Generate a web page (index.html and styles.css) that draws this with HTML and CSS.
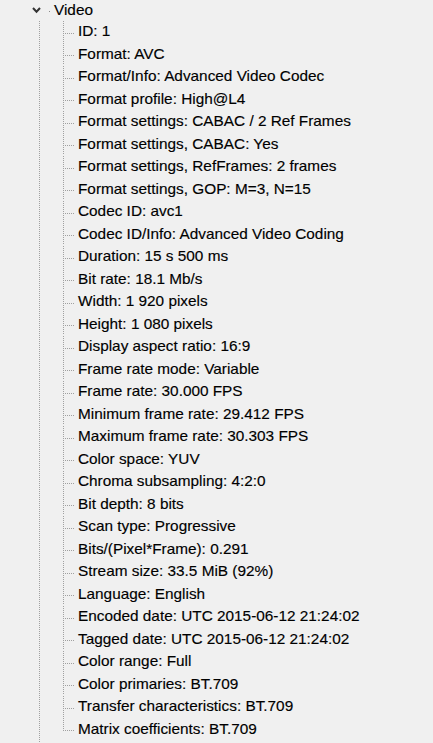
FILE: index.html
```html
<!DOCTYPE html>
<html>
<head>
<meta charset="utf-8">
<link rel="stylesheet" href="styles.css">
</head>
<body>
<div class="tree">
  <div class="root">
    <svg class="chev" width="10" height="7" viewBox="0 0 10 7"><polyline points="1,1 4.5,4.8 8,1" fill="none" stroke="#333" stroke-width="2"/></svg>
    <span class="rootdot"></span>
    <span class="label">Video</span>
  </div>
  <ul class="children">
    <li>ID: 1</li>
    <li>Format: AVC</li>
    <li>Format/Info: Advanced Video Codec</li>
    <li>Format profile: High@L4</li>
    <li>Format settings: CABAC / 2 Ref Frames</li>
    <li>Format settings, CABAC: Yes</li>
    <li>Format settings, RefFrames: 2 frames</li>
    <li>Format settings, GOP: M=3, N=15</li>
    <li>Codec ID: avc1</li>
    <li>Codec ID/Info: Advanced Video Coding</li>
    <li>Duration: 15 s 500 ms</li>
    <li>Bit rate: 18.1 Mb/s</li>
    <li>Width: 1 920 pixels</li>
    <li>Height: 1 080 pixels</li>
    <li>Display aspect ratio: 16:9</li>
    <li>Frame rate mode: Variable</li>
    <li>Frame rate: 30.000 FPS</li>
    <li>Minimum frame rate: 29.412 FPS</li>
    <li>Maximum frame rate: 30.303 FPS</li>
    <li>Color space: YUV</li>
    <li>Chroma subsampling: 4:2:0</li>
    <li>Bit depth: 8 bits</li>
    <li>Scan type: Progressive</li>
    <li>Bits/(Pixel*Frame): 0.291</li>
    <li>Stream size: 33.5 MiB (92%)</li>
    <li>Language: English</li>
    <li>Encoded date: UTC 2015-06-12 21:24:02</li>
    <li>Tagged date: UTC 2015-06-12 21:24:02</li>
    <li>Color range: Full</li>
    <li>Color primaries: BT.709</li>
    <li>Transfer characteristics: BT.709</li>
    <li>Matrix coefficients: BT.709</li>
  </ul>
</div>
</body>
</html>
```

FILE: styles.css
```css
html, body {
  margin: 0;
  padding: 0;
  background: #f0f0f0;
}

body {
  font-family: "Liberation Sans", Arial, sans-serif;
  font-size: 15.35px;
  color: #000;
  height: 743px;
  overflow: hidden;
  -webkit-text-stroke: 0.15px #000;
}

.tree {
  display: flex;
  flex-direction: column;
}

.root {
  height: 20px;
  display: flex;
  align-items: center;
  padding-left: 32px;
}

.chev {
  display: block;
  margin-top: 1px;
}

.rootdot {
  width: 1px;
  height: 1px;
  background: #8a8a8a;
  margin-left: 7px;
  margin-top: 2px;
}

.label {
  margin-left: 4px;
  line-height: 20px;
}

.children {
  list-style: none;
  margin: 0;
  padding: 0 0 30px 0;
  background: repeating-linear-gradient(to bottom, #a0a0a0 0 1px, transparent 1px 2px) 39px 1px / 1px 100% no-repeat;
}

.children li {
  height: 22px;
  line-height: 22px;
  padding-left: 78px;
  white-space: nowrap;
  background:
    repeating-linear-gradient(to right, #a0a0a0 0 1px, transparent 1px 2px) 65px 13px / 10px 1px no-repeat,
    repeating-linear-gradient(to bottom, #a0a0a0 0 1px, transparent 1px 2px) 63px 1px / 1px 100% no-repeat;
}

.children li:nth-child(even) {
  height: 23px;
  line-height: 23px;
}

.children li:last-child {
  background:
    repeating-linear-gradient(to right, #a0a0a0 0 1px, transparent 1px 2px) 65px 13px / 10px 1px no-repeat,
    repeating-linear-gradient(to bottom, #a0a0a0 0 1px, transparent 1px 2px) 63px 1px / 1px 13px no-repeat;
}
```
